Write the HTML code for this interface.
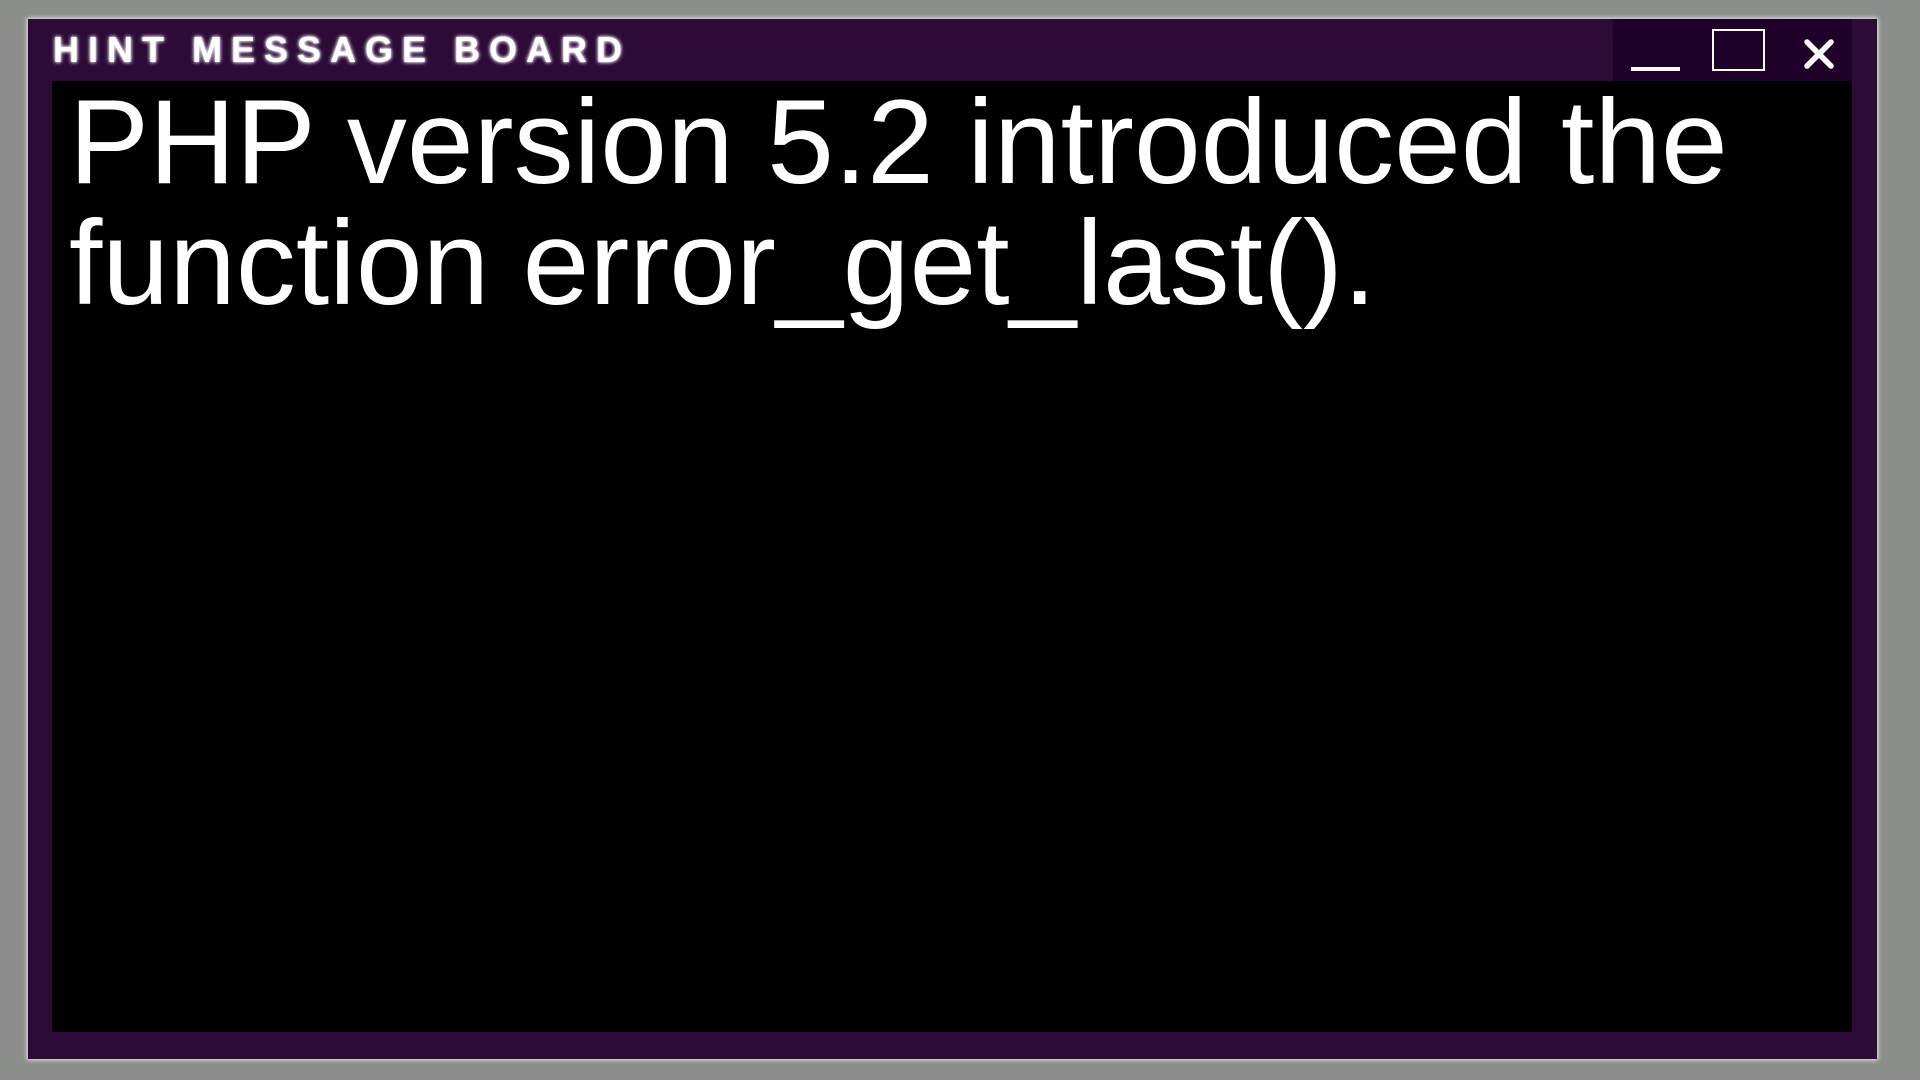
<!DOCTYPE html>
<html><head><meta charset="utf-8"><style>
html,body{margin:0;padding:0;width:1920px;height:1080px;background:#8c8e8c;overflow:hidden}
.win{position:absolute;left:28px;top:19px;width:1849px;height:1040px;background:#2c0c36;box-shadow:0 0 4px 1px #e8e8e8}
.title{position:absolute;left:25px;top:13px;font-family:"Liberation Sans",sans-serif;font-weight:bold;font-size:36px;letter-spacing:9px;color:#fff;text-shadow:0 0 3px #fff,0 0 5px #d8b8e0;line-height:36px;white-space:nowrap}
.ctrl{position:absolute;left:1585px;top:0;width:239px;height:62px;background:#1f0029}
.min{position:absolute;left:18px;top:48px;width:49px;height:4px;background:#fff}
.max{position:absolute;left:99px;top:10px;width:49px;height:38px;border:2px solid #fff}
.content{position:absolute;left:24px;top:62px;width:1800px;height:951px;background:#000}
.txt{position:absolute;left:17px;top:1px;font-family:"Liberation Sans",Arial,sans-serif;font-size:120px;line-height:121px;color:#fff;white-space:nowrap}
</style></head><body>
<div class="win">
<div class="title">HINT MESSAGE BOARD</div>
<div class="ctrl"><div class="min"></div><div class="max"></div>
<svg style="position:absolute;left:190px;top:19px" width="32" height="32" viewBox="0 0 32 32"><path d="M4 4L28 28M28 4L4 28" stroke="#fff" stroke-width="5.5" stroke-linecap="round"/></svg></div>
<div class="content"><div class="txt">PHP version 5.2 introduced the<br>function error_get_last().</div></div>
</div>
</body></html>
